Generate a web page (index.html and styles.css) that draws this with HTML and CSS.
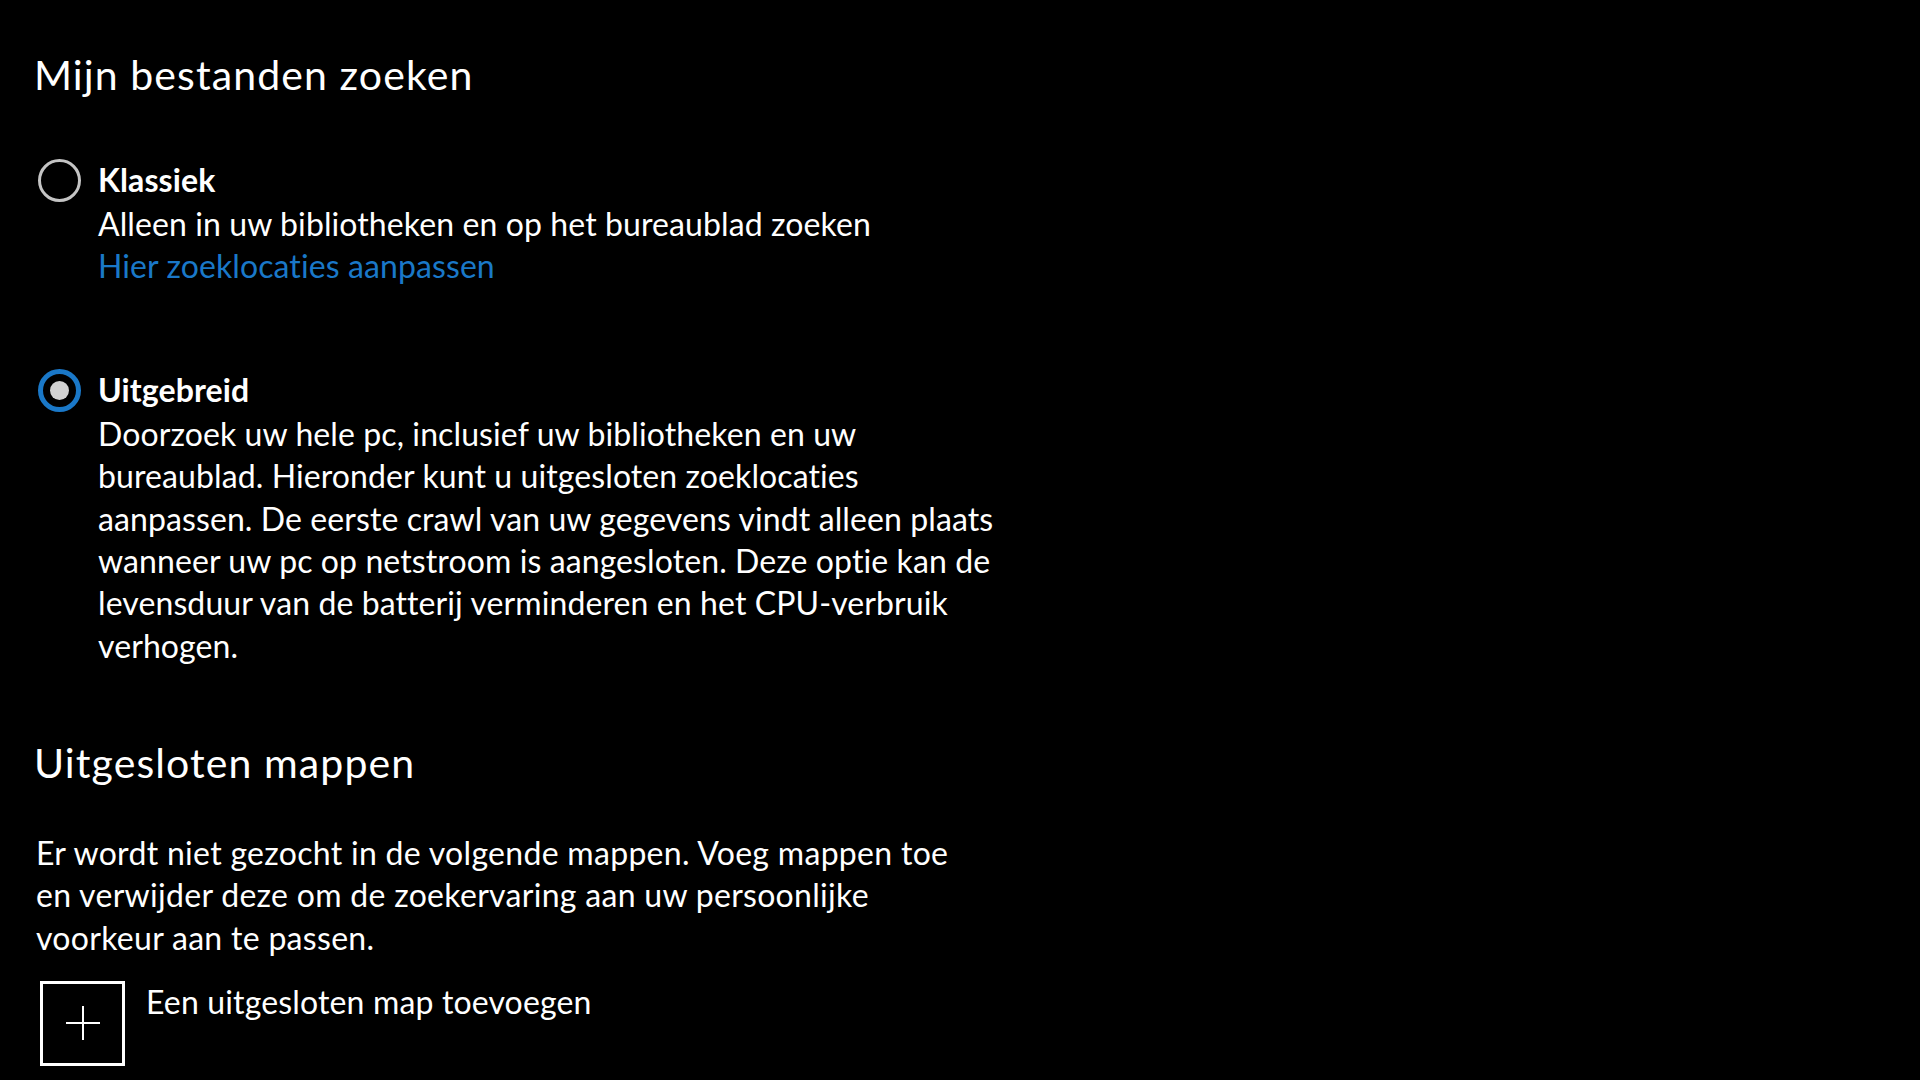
FILE: index.html
```html
<!DOCTYPE html>
<html lang="nl">
<head>
<meta charset="utf-8">
<title>Mijn bestanden zoeken</title>
<link rel="stylesheet" href="styles.css">
</head>
<body>
<main class="page">
  <h1 class="heading">Mijn bestanden zoeken</h1>

  <div class="option option-first">
    <span class="radio"></span>
    <div class="option-text">
      <span class="line label">Klassiek</span>
      <span class="line">Alleen in uw bibliotheken en op het bureaublad zoeken</span>
      <a class="line link" href="#">Hier zoeklocaties aanpassen</a>
    </div>
  </div>

  <div class="option option-second">
    <span class="radio radio-checked"><span class="radio-dot"></span></span>
    <div class="option-text">
      <span class="line label">Uitgebreid</span>
      <span class="line">Doorzoek uw hele pc, inclusief uw bibliotheken en uw</span>
      <span class="line">bureaublad. Hieronder kunt u uitgesloten zoeklocaties</span>
      <span class="line">aanpassen. De eerste crawl van uw gegevens vindt alleen plaats</span>
      <span class="line">wanneer uw pc op netstroom is aangesloten. Deze optie kan de</span>
      <span class="line">levensduur van de batterij verminderen en het CPU-verbruik</span>
      <span class="line">verhogen.</span>
    </div>
  </div>

  <h2 class="heading heading-second">Uitgesloten mappen</h2>

  <p class="para">
    <span class="line">Er wordt niet gezocht in de volgende mappen. Voeg mappen toe</span>
    <span class="line">en verwijder deze om de zoekervaring aan uw persoonlijke</span>
    <span class="line">voorkeur aan te passen.</span>
  </p>

  <div class="add-row">
    <span class="add-box">
      <svg class="plus" width="34" height="34" viewBox="0 0 34 34"><path d="M17 0V34M0 17H34" stroke="#fff" stroke-width="2" fill="none"/></svg>
    </span>
    <span class="add-label">Een uitgesloten map toevoegen</span>
  </div>
</main>
</body>
</html>
```
FILE: styles.css
```css
html, body {
  margin: 0;
  padding: 0;
  background: #000;
}
body {
  width: 1920px;
  height: 1080px;
  overflow: hidden;
  color: #fff;
  font-family: "Lato", "Open Sans", "Noto Sans", sans-serif;
}
.page {
  padding: 48px 0 0 34px;
  display: flex;
  flex-direction: column;
}
.heading {
  margin: 0;
  font-size: 41px;
  line-height: 54px;
  font-weight: 400;
  letter-spacing: 1.1px;
  white-space: nowrap;
}
.option {
  display: flex;
  align-items: flex-start;
  gap: 17px;
  margin-left: 4px;
}
.option-first {
  margin-top: 57px;
}
.option-second {
  margin-top: 82px;
}
.radio {
  flex: none;
  box-sizing: border-box;
  width: 43px;
  height: 43px;
  border-radius: 50%;
  border: 3px solid #c4c4c4;
  display: flex;
  align-items: center;
  justify-content: center;
}
.radio-checked {
  border: 5px solid #1a78c8;
}
.radio-dot {
  width: 19px;
  height: 19px;
  border-radius: 50%;
  background: #d2d2d2;
}
.option-text {
  display: flex;
  flex-direction: column;
  font-size: 32px;
  line-height: 42.3px;
  letter-spacing: 0.1px;
}
.label {
  font-weight: 700;
  margin-bottom: 1.5px;
}
.line {
  display: block;
  white-space: nowrap;
}
.link {
  color: #1a78c8;
  text-decoration: none;
}
.heading-second {
  margin-top: 69px;
}
.para {
  margin: 42px 0 0 2px;
  font-size: 32px;
  line-height: 42.3px;
  letter-spacing: 0.3px;
}
.add-row {
  display: flex;
  align-items: flex-start;
  gap: 21px;
  margin: 22px 0 0 6px;
}
.add-box {
  box-sizing: border-box;
  width: 85px;
  height: 85px;
  border: 3px solid #fff;
  display: flex;
  align-items: center;
  justify-content: center;
}
.add-label {
  font-size: 32px;
  line-height: 42px;
  letter-spacing: 0.15px;
  white-space: nowrap;
}
```
